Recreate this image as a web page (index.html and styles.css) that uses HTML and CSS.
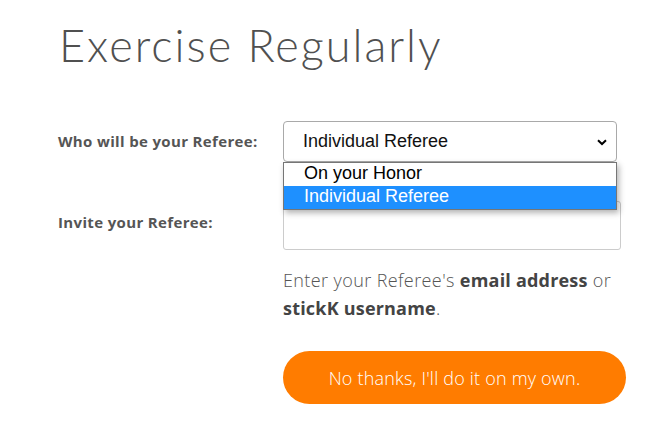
FILE: index.html
```html
<!DOCTYPE html>
<html>
<head>
<meta charset="utf-8">
<link rel="stylesheet" href="styles.css">
</head>
<body>
<div class="page">
  <h1 class="title">Exercise Regularly</h1>
  <div class="form">
    <div class="label label-first">Who will be your Referee:</div>
    <div class="field">
      <div class="select">
        <span class="select-value">Individual Referee</span>
        <svg class="chevron" width="10" height="7" viewBox="0 0 10 7"><path d="M1 1.2 L5 5 L9 1.2" fill="none" stroke="#000" stroke-width="2"/></svg>
      </div>
      <div class="menu">
        <div class="option">On your Honor</div>
        <div class="option selected">Individual Referee</div>
      </div>
    </div>
    <div class="label label-second">Invite your Referee:</div>
    <div class="field">
      <div class="input"></div>
      <p class="help">Enter your Referee's <b>email address</b> or <b>stickK username</b>.</p>
      <button class="btn">No thanks, I'll do it on my own.</button>
    </div>
  </div>
</div>
</body>
</html>
```

FILE: styles.css
```css
html, body {
  margin: 0;
  padding: 0;
  background: #fff;
}
.page {
  padding: 14px 0 0 58px;
  color: #4a4a4a;
}
.title {
  margin: 0 0 0 1px;
  font-family: Lato, "Open Sans", sans-serif;
  font-weight: 300;
  font-size: 45px;
  line-height: 62px;
  letter-spacing: 2px;
  color: #505050;
}
.form {
  display: grid;
  grid-template-columns: 225px 345px;
  margin-top: 45px;
}
.label {
  font-family: "Open Sans", Lato, sans-serif;
  font-weight: 700;
  font-size: 15px;
  color: #555;
  letter-spacing: 0.35px;
}
.label-first {
  padding-top: 10px;
}
.label-second {
  padding-top: 50px;
}
.field {
  position: relative;
}
.select {
  width: 334px;
  height: 41px;
  box-sizing: border-box;
  border: 1px solid #a9a9a9;
  border-radius: 4px;
  display: flex;
  align-items: center;
  justify-content: space-between;
  padding: 0 9px 0 19px;
  font-family: Arial, "Liberation Sans", sans-serif;
  font-size: 18px;
  color: #111;
}
.chevron {
  margin-top: 1px;
}
.menu {
  position: absolute;
  top: 41px;
  left: 0;
  width: 334px;
  box-sizing: border-box;
  border: 1px solid #767676;
  background: #fff;
  box-shadow: 2px 3px 6px rgba(0, 0, 0, 0.3);
  font-family: Arial, "Liberation Sans", sans-serif;
  font-size: 18px;
  color: #000;
  z-index: 2;
}
.option {
  height: 23px;
  line-height: 21px;
  padding-left: 20px;
}
.selected {
  background: #1e90ff;
  color: #fff;
}
.input {
  width: 338px;
  height: 49px;
  box-sizing: border-box;
  border: 1px solid #ccc;
  border-radius: 3px;
  margin-top: 39px;
}
.help {
  margin: 16px 0 0;
  width: 345px;
  font-family: "Open Sans", Lato, sans-serif;
  font-weight: 300;
  font-size: 18px;
  letter-spacing: 0.4px;
  line-height: 28px;
  color: #555;
}
.help b {
  font-weight: 700;
  color: #444;
  letter-spacing: 0.2px;
}
.btn {
  display: block;
  margin-top: 29px;
  width: 343px;
  height: 53px;
  border: none;
  border-radius: 27px;
  background: #ff7c00;
  color: #fff;
  font-family: "Open Sans", Lato, sans-serif;
  font-weight: 300;
  font-size: 18px;
  letter-spacing: 0.2px;
}
```
